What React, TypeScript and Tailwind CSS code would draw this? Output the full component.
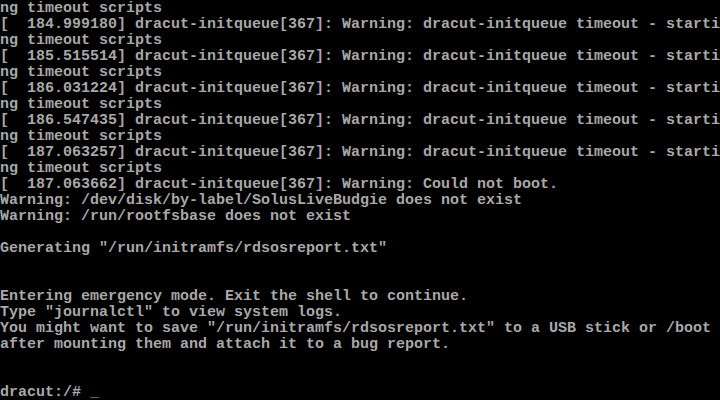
const lines = [
  "ng timeout scripts",
  "[  184.999180] dracut-initqueue[367]: Warning: dracut-initqueue timeout - starti",
  "ng timeout scripts",
  "[  185.515514] dracut-initqueue[367]: Warning: dracut-initqueue timeout - starti",
  "ng timeout scripts",
  "[  186.031224] dracut-initqueue[367]: Warning: dracut-initqueue timeout - starti",
  "ng timeout scripts",
  "[  186.547435] dracut-initqueue[367]: Warning: dracut-initqueue timeout - starti",
  "ng timeout scripts",
  "[  187.063257] dracut-initqueue[367]: Warning: dracut-initqueue timeout - starti",
  "ng timeout scripts",
  "[  187.063662] dracut-initqueue[367]: Warning: Could not boot.",
  "Warning: /dev/disk/by-label/SolusLiveBudgie does not exist",
  "Warning: /run/rootfsbase does not exist",
  "",
  'Generating "/run/initramfs/rdsosreport.txt"',
  "",
  "",
  "Entering emergency mode. Exit the shell to continue.",
  'Type "journalctl" to view system logs.',
  'You might want to save "/run/initramfs/rdsosreport.txt" to a USB stick or /boot',
  "after mounting them and attach it to a bug report.",
  "",
  "",
  "dracut:/# _",
];

export default function App() {
  return (
    <div className="w-[720px] h-[400px] bg-black overflow-hidden pt-px">
      <div className="flex flex-col font-['Liberation_Mono',monospace] text-[15px] leading-[16px] font-bold text-[#a8a8a8] whitespace-pre">
        {lines.map((l, i) => (
          <div key={i} className="h-4">
            {l}
          </div>
        ))}
      </div>
    </div>
  );
}
